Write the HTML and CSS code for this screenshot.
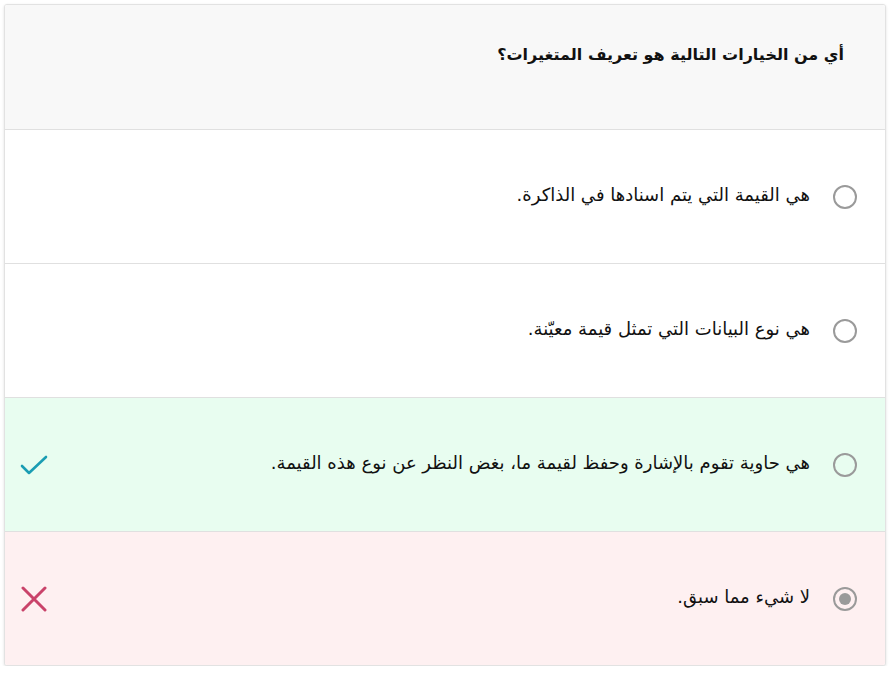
FILE: index.html
```html
<!DOCTYPE html>
<html lang="ar" dir="rtl">
<head>
<meta charset="utf-8">
<link rel="stylesheet" href="styles.css">
</head>
<body>
<div class="card">
  <div class="question">أي من الخيارات التالية هو تعريف المتغيرات؟</div>
  <div class="option">
    <span class="radio"></span>
    <span class="label">هي القيمة التي يتم اسنادها في الذاكرة.</span>
  </div>
  <div class="option">
    <span class="radio"></span>
    <span class="label">هي نوع البيانات التي تمثل قيمة معيّنة.</span>
  </div>
  <div class="option correct">
    <span class="radio"></span>
    <span class="label">هي حاوية تقوم بالإشارة وحفظ لقيمة ما، بغض النظر عن نوع هذه القيمة.</span>
    <svg class="mark" width="30" height="24" viewBox="0 0 30 24"><path d="M3 13 L10 20 L27 4" fill="none" stroke="#1a9db3" stroke-width="2.6" stroke-linecap="round" stroke-linejoin="round"/></svg>
  </div>
  <div class="option wrong">
    <span class="radio checked"></span>
    <span class="label">لا شيء مما سبق.</span>
    <svg class="mark" width="30" height="26" viewBox="0 0 30 26"><path d="M4 2 L26 24 M26 2 L4 24" fill="none" stroke="#c9436a" stroke-width="3" stroke-linecap="round"/></svg>
  </div>
</div>
</body>
</html>
```
FILE: styles.css
```css
html, body {
  margin: 0;
  padding: 0;
  background: #ffffff;
}
body {
  padding: 4px 6px 0 4px;
  font-family: "DejaVu Sans", "Noto Sans", sans-serif;
  color: #111;
}
.card {
  border: 1px solid #e2e2e2;
  border-radius: 3px;
  box-shadow: 0 1px 3px rgba(0,0,0,0.12);
  overflow: hidden;
  background: #fff;
}
.question {
  height: 125px;
  box-sizing: border-box;
  background: #f8f8f8;
  border-bottom: 1px solid #e0e0e0;
  padding: 36px 41px 0 0;
  font-size: 16px;
  font-weight: bold;
  line-height: 28px;
}
.option {
  height: 134px;
  box-sizing: border-box;
  border-bottom: 1px solid #e0e0e0;
  display: flex;
  align-items: center;
  gap: 23px;
  padding: 0 28px 0 14px;
  font-size: 18px;
}
.option:last-child { border-bottom: none; height: 133px; }
.option.correct { background: #e8fdf0; }
.option.wrong { background: #fef0f1; }
.radio {
  width: 20px;
  height: 20px;
  border: 2px solid #9a9a9a;
  border-radius: 50%;
  flex: none;
  display: flex;
  align-items: center;
  justify-content: center;
}
.radio.checked::after {
  content: "";
  width: 12px;
  height: 12px;
  border-radius: 50%;
  background: #9a9a9a;
}
.label { flex: 1; padding-bottom: 4px; }
.mark { flex: none; }
```
